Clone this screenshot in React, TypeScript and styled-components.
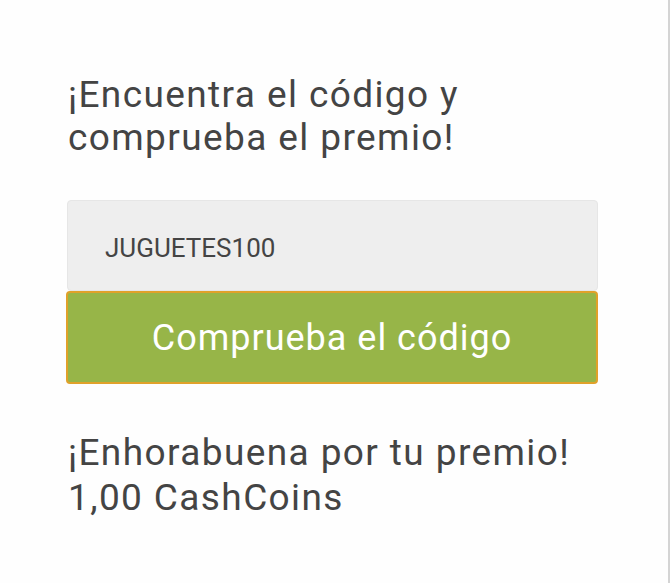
import styled, { createGlobalStyle } from 'styled-components';

const GlobalStyle = createGlobalStyle`
  html, body {
    margin: 0;
    padding: 0;
    background: #fff;
  }
  body {
    font-family: Roboto, 'Liberation Sans', sans-serif;
  }
`;

const Page = styled.div`
  box-sizing: border-box;
  width: 670px;
  height: 583px;
  border-right: 2px solid #d4d4d4;
  padding: 73px 0 0 67px;
  background: #fefefe;
`;

const Panel = styled.div`
  width: 531px;
  display: flex;
  flex-direction: column;
`;

const Title = styled.h1`
  margin: 0 0 0 1px;
  font-size: 37px;
  font-weight: 400;
  line-height: 43px;
  letter-spacing: 1.4px;
  color: #444;
`;

const CodeForm = styled.form`
  margin-top: 41px;
  display: flex;
  flex-direction: column;
`;

const CodeInput = styled.input`
  box-sizing: border-box;
  height: 91px;
  width: 100%;
  padding: 4px 0 0 37px;
  border: 1px solid #e6e6e6;
  border-radius: 4px;
  background: #eeeeee;
  font-family: Roboto, 'Liberation Sans', sans-serif;
  font-size: 26px;
  color: #444;
  outline: none;
`;

const CheckButton = styled.button`
  box-sizing: border-box;
  height: 93px;
  width: 532px;
  margin-left: -1px;
  border: 2px solid #e0a12a;
  border-radius: 4px;
  background: #97b548;
  color: #fff;
  font-family: Roboto, 'Liberation Sans', sans-serif;
  font-size: 36px;
  letter-spacing: 1px;
  cursor: pointer;
`;

const Result = styled.p`
  margin: 46px 0 0 1px;
  font-size: 37px;
  line-height: 45px;
  letter-spacing: 1.4px;
  color: #444;
`;

export default function App() {
  return (
    <>
      <GlobalStyle />
      <Page>
        <Panel>
          <Title>
            ¡Encuentra el código y
            <br />
            comprueba el premio!
          </Title>
          <CodeForm onSubmit={(e) => e.preventDefault()}>
            <CodeInput defaultValue="JUGUETES100" />
            <CheckButton type="submit">Comprueba el código</CheckButton>
          </CodeForm>
          <Result>
            ¡Enhorabuena por tu premio!
            <br />
            1,00 CashCoins
          </Result>
        </Panel>
      </Page>
    </>
  );
}
